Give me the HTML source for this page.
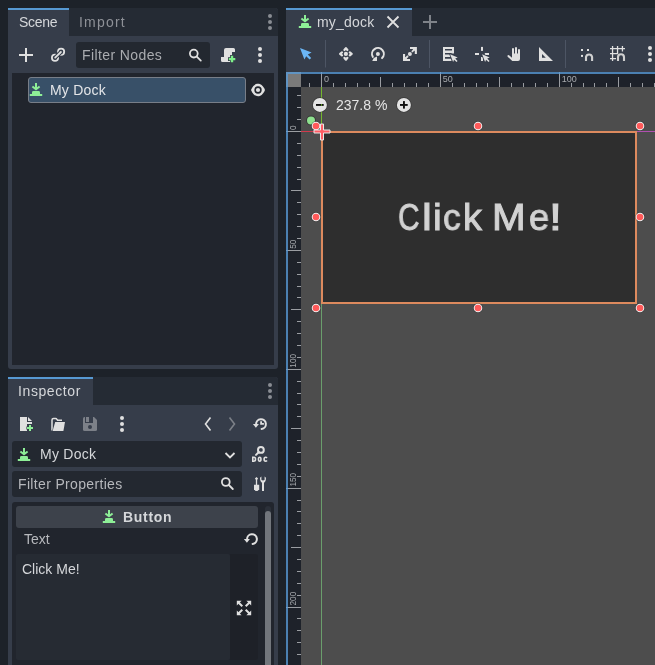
<!DOCTYPE html>
<html><head><meta charset="utf-8">
<style>
html,body{margin:0;padding:0;}
body{width:655px;height:665px;overflow:hidden;background:#1d2229;position:relative;font-family:"Liberation Sans",sans-serif;font-size:14px;color:#e0e0e0;}
.a{position:absolute;}
.t{position:absolute;white-space:nowrap;line-height:1;will-change:transform;}
svg{position:absolute;left:0;top:0;overflow:visible;will-change:transform;}
</style></head><body>

<!-- ============ SCENE DOCK ============ -->
<div class="a" style="left:8px;top:8px;width:270px;height:361px;background:#363d4a;border-radius:3px;"></div>
<div class="a" style="left:69px;top:8px;width:209px;height:28px;background:#252b34;border-top-right-radius:3px;"></div>
<div class="a" style="left:8px;top:8px;width:61px;height:2px;background:#5799d2;"></div>
<div class="t" style="left:19px;top:15px;color:#d5d7da;letter-spacing:-0.3px;">Scene</div>
<div class="t" style="left:79px;top:15px;color:#8e9197;letter-spacing:1.2px;">Import</div>

<div class="a" style="left:76px;top:42px;width:134px;height:26px;background:#232830;border-radius:3px;"></div>
<div class="t" style="left:82px;top:48px;color:#aaacb0;letter-spacing:0.4px;">Filter Nodes</div>

<div class="a" style="left:12px;top:73px;width:262px;height:292px;background:#21252d;"></div>
<div class="a" style="left:28px;top:77px;width:216px;height:24px;background:#385068;border:1px solid #787e88;border-radius:3px;"></div>
<div class="t" style="left:50px;top:83px;color:#e3e5e8;letter-spacing:0.2px;">My Dock</div>

<!-- ============ INSPECTOR DOCK ============ -->
<div class="a" style="left:8px;top:377px;width:270px;height:300px;background:#363d4a;border-radius:3px;"></div>
<div class="a" style="left:93px;top:377px;width:185px;height:28px;background:#252b34;border-top-right-radius:3px;"></div>
<div class="a" style="left:8px;top:377px;width:85px;height:2px;background:#5799d2;"></div>
<div class="t" style="left:18px;top:384px;color:#d5d7da;letter-spacing:0.6px;">Inspector</div>

<div class="a" style="left:12px;top:441px;width:230px;height:26px;background:#232830;border-radius:3px;"></div>
<div class="t" style="left:40px;top:447px;color:#d5d7da;letter-spacing:0.25px;">My Dock</div>
<div class="a" style="left:12px;top:471px;width:230px;height:26px;background:#232830;border-radius:3px;"></div>
<div class="t" style="left:18px;top:477px;color:#b6b8bc;letter-spacing:0.34px;">Filter Properties</div>

<div class="a" style="left:12px;top:502px;width:262px;height:170px;background:#21252d;border-radius:3px;"></div>
<div class="a" style="left:16px;top:506px;width:242px;height:22px;background:#3d424b;border-radius:3px;"></div>
<div class="t" style="left:123px;top:510px;color:#d5d7da;font-weight:bold;letter-spacing:0.7px;">Button</div>
<div class="t" style="left:24px;top:532px;color:#b6b8bc;">Text</div>
<div class="a" style="left:16px;top:554px;width:214px;height:106px;background:#262b33;border-radius:2px;"></div>
<div class="t" style="left:22px;top:562px;color:#d5d7da;">Click Me!</div>
<div class="a" style="left:230px;top:554px;width:28px;height:106px;background:#1e2128;border-radius:0 3px 3px 0;"></div>
<div class="a" style="left:265px;top:506px;width:6px;height:170px;background:#2b3039;border-radius:3px;"></div>
<div class="a" style="left:265px;top:511px;width:6px;height:170px;background:#72767c;border-radius:3px;"></div>

<!-- ============ VIEWPORT ============ -->
<div class="a" style="left:286px;top:8px;width:369px;height:657px;background:#363d4a;border-top-left-radius:3px;"></div>
<div class="a" style="left:412px;top:8px;width:243px;height:28px;background:#252b34;"></div>
<div class="a" style="left:286px;top:8px;width:126px;height:2px;background:#5799d2;"></div>
<div class="t" style="left:317px;top:15px;color:#d5d7da;letter-spacing:0.2px;">my_dock</div>

<div class="a" style="left:286px;top:72px;width:369px;height:593px;background:#4d4d4d;"></div>
<div class="a" style="left:286px;top:72px;width:369px;height:15px;background:#1e222a;"></div>
<div class="a" style="left:286px;top:72px;width:15px;height:593px;background:#1e222a;"></div>
<div class="a" style="left:286px;top:72px;width:15px;height:15px;background:#7a7a7a;"></div>

<div class="a" style="left:321px;top:131px;width:312px;height:169px;background:#2e2e2e;border:2px solid #dd8a5e;"></div>
<div style="position:absolute;left:0;top:0;color:#d2d2d2;-webkit-text-stroke:1.0px #d0d0d0;filter:blur(0.5px);"><div class="t" style="left:398.0px;top:199px;font-size:37px;transform:scaleX(0.805);transform-origin:0 0;">C</div><div class="t" style="left:422.1px;top:199px;font-size:37px;transform:scaleX(1.189);transform-origin:0 0;">l</div><div class="t" style="left:432.7px;top:199px;font-size:37px;transform:scaleX(1.059);transform-origin:0 0;">i</div><div class="t" style="left:442.9px;top:199px;font-size:37px;transform:scaleX(0.955);transform-origin:0 0;">c</div><div class="t" style="left:462.7px;top:199px;font-size:37px;transform:scaleX(1.021);transform-origin:0 0;">k</div><div class="t" style="left:492.4px;top:199px;font-size:37px;transform:scaleX(1.093);transform-origin:0 0;">M</div><div class="t" style="left:529.2px;top:199px;font-size:37px;transform:scaleX(0.978);transform-origin:0 0;">e</div><div class="t" style="left:549.2px;top:199px;font-size:37px;transform:scaleX(1.254);transform-origin:0 0;">!</div></div>
<div class="t" style="left:336px;top:98px;font-size:14px;color:#e6e6e6;">237.8 %</div>

<svg width="655" height="665" viewBox="0 0 655 665">

<defs>
<symbol id="gi" viewBox="0 0 16 16">
<path d="M7 2h2v5.2h-2z" fill="#8eef97"/>
<path d="M4.4 5.4 L8 8.3 L11.6 5.4" stroke="#8eef97" stroke-width="1.9" fill="none"/>
<path d="M4 13 V11.4 Q4 10 5.4 10 H10.6 Q12 10 12 11.4 V13 H14.2 V15 H1.8 V13Z" fill="#8eef97"/>
</symbol>
</defs>

<g stroke="#9a9da2" stroke-width="1"><line x1="309.5" y1="83" x2="309.5" y2="87" /><line x1="321.5" y1="72" x2="321.5" y2="87" /><line x1="333.5" y1="83" x2="333.5" y2="87" /><line x1="345.5" y1="83" x2="345.5" y2="87" /><line x1="357.5" y1="83" x2="357.5" y2="87" /><line x1="369.5" y1="83" x2="369.5" y2="87" /><line x1="380.5" y1="77" x2="380.5" y2="87" /><line x1="392.5" y1="83" x2="392.5" y2="87" /><line x1="404.5" y1="83" x2="404.5" y2="87" /><line x1="416.5" y1="83" x2="416.5" y2="87" /><line x1="428.5" y1="83" x2="428.5" y2="87" /><line x1="440.5" y1="72" x2="440.5" y2="87" /><line x1="452.5" y1="83" x2="452.5" y2="87" /><line x1="464.5" y1="83" x2="464.5" y2="87" /><line x1="476.5" y1="83" x2="476.5" y2="87" /><line x1="487.5" y1="83" x2="487.5" y2="87" /><line x1="499.5" y1="77" x2="499.5" y2="87" /><line x1="511.5" y1="83" x2="511.5" y2="87" /><line x1="523.5" y1="83" x2="523.5" y2="87" /><line x1="535.5" y1="83" x2="535.5" y2="87" /><line x1="547.5" y1="83" x2="547.5" y2="87" /><line x1="559.5" y1="72" x2="559.5" y2="87" /><line x1="571.5" y1="83" x2="571.5" y2="87" /><line x1="583.5" y1="83" x2="583.5" y2="87" /><line x1="594.5" y1="83" x2="594.5" y2="87" /><line x1="606.5" y1="83" x2="606.5" y2="87" /><line x1="618.5" y1="77" x2="618.5" y2="87" /><line x1="630.5" y1="83" x2="630.5" y2="87" /><line x1="642.5" y1="83" x2="642.5" y2="87" /><line x1="654.5" y1="83" x2="654.5" y2="87" /><line x1="297" y1="95.5" x2="301" y2="95.5" /><line x1="297" y1="107.5" x2="301" y2="107.5" /><line x1="297" y1="119.5" x2="301" y2="119.5" /><line x1="286" y1="131.5" x2="301" y2="131.5" /><line x1="297" y1="143.5" x2="301" y2="143.5" /><line x1="297" y1="155.5" x2="301" y2="155.5" /><line x1="297" y1="167.5" x2="301" y2="167.5" /><line x1="297" y1="179.5" x2="301" y2="179.5" /><line x1="291" y1="190.5" x2="301" y2="190.5" /><line x1="297" y1="202.5" x2="301" y2="202.5" /><line x1="297" y1="214.5" x2="301" y2="214.5" /><line x1="297" y1="226.5" x2="301" y2="226.5" /><line x1="297" y1="238.5" x2="301" y2="238.5" /><line x1="286" y1="250.5" x2="301" y2="250.5" /><line x1="297" y1="262.5" x2="301" y2="262.5" /><line x1="297" y1="274.5" x2="301" y2="274.5" /><line x1="297" y1="286.5" x2="301" y2="286.5" /><line x1="297" y1="297.5" x2="301" y2="297.5" /><line x1="291" y1="309.5" x2="301" y2="309.5" /><line x1="297" y1="321.5" x2="301" y2="321.5" /><line x1="297" y1="333.5" x2="301" y2="333.5" /><line x1="297" y1="345.5" x2="301" y2="345.5" /><line x1="297" y1="357.5" x2="301" y2="357.5" /><line x1="286" y1="369.5" x2="301" y2="369.5" /><line x1="297" y1="381.5" x2="301" y2="381.5" /><line x1="297" y1="393.5" x2="301" y2="393.5" /><line x1="297" y1="404.5" x2="301" y2="404.5" /><line x1="297" y1="416.5" x2="301" y2="416.5" /><line x1="291" y1="428.5" x2="301" y2="428.5" /><line x1="297" y1="440.5" x2="301" y2="440.5" /><line x1="297" y1="452.5" x2="301" y2="452.5" /><line x1="297" y1="464.5" x2="301" y2="464.5" /><line x1="297" y1="476.5" x2="301" y2="476.5" /><line x1="286" y1="488.5" x2="301" y2="488.5" /><line x1="297" y1="500.5" x2="301" y2="500.5" /><line x1="297" y1="511.5" x2="301" y2="511.5" /><line x1="297" y1="523.5" x2="301" y2="523.5" /><line x1="297" y1="535.5" x2="301" y2="535.5" /><line x1="291" y1="547.5" x2="301" y2="547.5" /><line x1="297" y1="559.5" x2="301" y2="559.5" /><line x1="297" y1="571.5" x2="301" y2="571.5" /><line x1="297" y1="583.5" x2="301" y2="583.5" /><line x1="297" y1="595.5" x2="301" y2="595.5" /><line x1="286" y1="607.5" x2="301" y2="607.5" /><line x1="297" y1="618.5" x2="301" y2="618.5" /><line x1="297" y1="630.5" x2="301" y2="630.5" /><line x1="297" y1="642.5" x2="301" y2="642.5" /><line x1="297" y1="654.5" x2="301" y2="654.5" /></g><g fill="#a6a9ad" font-size="9" font-family="Liberation Sans"><text x="323.9" y="82" >0</text><text x="442.8" y="82" >50</text><text x="561.7" y="82" >100</text><text transform="translate(296,129.9) rotate(-90)" font-size="9.3" textLength="4.6" lengthAdjust="spacingAndGlyphs">0</text><text transform="translate(296,248.8) rotate(-90)" font-size="9.3" textLength="9.2" lengthAdjust="spacingAndGlyphs">50</text><text transform="translate(296,367.7) rotate(-90)" font-size="9.3" textLength="13.8" lengthAdjust="spacingAndGlyphs">100</text><text transform="translate(296,486.6) rotate(-90)" font-size="9.3" textLength="13.8" lengthAdjust="spacingAndGlyphs">150</text><text transform="translate(296,605.5) rotate(-90)" font-size="9.3" textLength="13.8" lengthAdjust="spacingAndGlyphs">200</text></g>
<line x1="321.5" y1="87" x2="321.5" y2="131" stroke="#74b72e" stroke-width="1"/>
<line x1="321.5" y1="304" x2="321.5" y2="665" stroke="#6a9e6c" stroke-width="1"/>
<line x1="301" y1="131.5" x2="321" y2="131.5" stroke="#d13a4c" stroke-width="1"/>
<line x1="637" y1="131.5" x2="655" y2="131.5" stroke="#b04fb0" stroke-width="1"/>
<!-- zoom widget -->
<circle cx="319.9" cy="104.9" r="7.7" fill="#202020" opacity="0.45"/><circle cx="319.9" cy="104.9" r="7" fill="#e4e4e4"/><rect x="316" y="104" width="7.7" height="1.9" fill="#111"/><rect x="321" y="104" width="1" height="1.9" fill="#5a9a20"/>
<circle cx="403.9" cy="104.9" r="7.7" fill="#202020" opacity="0.45"/><circle cx="403.9" cy="104.9" r="7" fill="#e4e4e4"/><rect x="400" y="104" width="7.7" height="1.9" fill="#111"/><rect x="403" y="101.1" width="1.9" height="7.5" fill="#111"/>
<!-- pivot -->
<circle cx="311" cy="120.5" r="4.9" fill="#222" opacity="0.55"/>
<circle cx="311" cy="120.5" r="4" fill="#8ee08f"/>
<circle cx="316" cy="126" r="5" fill="#232323" opacity="0.35"/><circle cx="316" cy="126" r="4.3" fill="#f2f2f2"/><circle cx="316" cy="126" r="3.3" fill="#ff5a5a"/><circle cx="478" cy="126" r="5" fill="#232323" opacity="0.35"/><circle cx="478" cy="126" r="4.3" fill="#f2f2f2"/><circle cx="478" cy="126" r="3.3" fill="#ff5a5a"/><circle cx="640" cy="126" r="5" fill="#232323" opacity="0.35"/><circle cx="640" cy="126" r="4.3" fill="#f2f2f2"/><circle cx="640" cy="126" r="3.3" fill="#ff5a5a"/><circle cx="316" cy="217" r="5" fill="#232323" opacity="0.35"/><circle cx="316" cy="217" r="4.3" fill="#f2f2f2"/><circle cx="316" cy="217" r="3.3" fill="#ff5a5a"/><circle cx="640" cy="217" r="5" fill="#232323" opacity="0.35"/><circle cx="640" cy="217" r="4.3" fill="#f2f2f2"/><circle cx="640" cy="217" r="3.3" fill="#ff5a5a"/><circle cx="316" cy="308" r="5" fill="#232323" opacity="0.35"/><circle cx="316" cy="308" r="4.3" fill="#f2f2f2"/><circle cx="316" cy="308" r="3.3" fill="#ff5a5a"/><circle cx="478" cy="308" r="5" fill="#232323" opacity="0.35"/><circle cx="478" cy="308" r="4.3" fill="#f2f2f2"/><circle cx="478" cy="308" r="3.3" fill="#ff5a5a"/><circle cx="640" cy="308" r="5" fill="#232323" opacity="0.35"/><circle cx="640" cy="308" r="4.3" fill="#f2f2f2"/><circle cx="640" cy="308" r="3.3" fill="#ff5a5a"/>
<!-- pink cross -->
<path d="M320.5 124 h3 v6 h6.5 v3 h-6.5 v7 h-3 v-7 h-6.5 v-3 h6.5z" fill="#ff5c64" stroke="#e8e8e8" stroke-width="1"/>

<!-- scene dock icons -->
<g fill="#8a8d93"><circle cx="270" cy="16" r="2"/><circle cx="270" cy="22" r="2"/><circle cx="270" cy="28" r="2"/></g>
<g fill="#8a8d93"><circle cx="270" cy="385" r="2"/><circle cx="270" cy="391" r="2"/><circle cx="270" cy="397" r="2"/></g>
<path d="M19 55h14M26 48v14" stroke="#e0e0e0" stroke-width="2"/>
<use href="#gi" x="28" y="81" width="16" height="16"/>
<use href="#gi" x="297" y="13" width="16" height="16"/>
<use href="#gi" x="16" y="446" width="16" height="16"/>

<!-- link -->
<g fill="none" stroke="#e0e0e0" stroke-width="1.8">
<circle cx="55" cy="57.8" r="3.1"/><circle cx="61.1" cy="51.8" r="3.1"/>
<path d="M55.2 57.6 L60.9 52" stroke="#363d4a" stroke-width="4" stroke-linecap="round"/>
<path d="M55.2 57.6 L60.9 52" stroke-linecap="round"/>
</g>
<!-- search -->
<g fill="none" stroke="#e0e0e0" stroke-width="1.8" stroke-linecap="round">
<circle cx="193.8" cy="53.6" r="3.9"/><path d="M196.8 56.6 L200.8 60.6"/>
<circle cx="225.8" cy="482" r="3.9"/><path d="M228.8 485 L232.8 489"/>
</g>
<!-- script add -->
<g fill="#e0e0e0">
<path d="M224 50 Q224 48 226 48 H233.5 Q235 48 235 49.5 V52 H232 V62 H222.5 Q221 62 221 60.5 V57 H224 Z"/>
</g>
<g fill="#7ef08a" stroke="#363d4a" stroke-width="1.6" paint-order="stroke">
<path d="M230.9 55.8h2.3v2.2h2.1v2.3h-2.1v2h-2.3v-2h-2.1v-2.3h2.1z"/>
</g>
<g fill="#e0e0e0"><circle cx="260" cy="49" r="2"/><circle cx="260" cy="55" r="2"/><circle cx="260" cy="61" r="2"/></g>
<!-- eye -->
<path d="M251 90 C253 85.2 255.6 83.8 258 83.8 C260.4 83.8 263 85.2 265 90 C263 94.8 260.4 96.2 258 96.2 C255.6 96.2 253 94.8 251 90Z" fill="#e0e0e0"/>
<circle cx="258" cy="90" r="3.7" fill="#21252d"/><circle cx="258" cy="90" r="2.1" fill="#e0e0e0"/>

<!-- inspector toolbar -->
<g fill="#e0e0e0">
<rect x="20" y="417" width="7" height="14"/>
<path d="M28 417 L32 421 H28Z"/>
<rect x="27" y="422" width="5" height="2"/>
</g>
<path d="M29 425h2v2h2v2h-2v2h-2v-2h-2v-2h2z" fill="#8eef97" stroke="#363d4a" stroke-width="1.2" paint-order="stroke"/>
<path d="M52 430.5 V420 Q52 418.5 53.5 418.5 H55.5 Q56.5 418.5 57 419.5 L57.5 420.3 H62" fill="none" stroke="#e0e0e0" stroke-width="1.5"/>
<path d="M55.2 422 H65 L63.4 431 H52.6 Z" fill="#e0e0e0" stroke="#363d4a" stroke-width="0.8" paint-order="stroke"/>
<path d="M83 418.5 Q83 417 84.5 417 H94 L97 420 V429.5 Q97 431 95.5 431 H84.5 Q83 431 83 429.5 Z" fill="#7c8088"/>
<rect x="85" y="417" width="8" height="6" fill="#363d4a"/>
<rect x="86" y="417" width="3" height="5" fill="#7c8088"/>
<circle cx="90" cy="427" r="2" fill="#363d4a"/>
<g fill="#e0e0e0"><circle cx="122" cy="418" r="2"/><circle cx="122" cy="424" r="2"/><circle cx="122" cy="430" r="2"/></g>
<polyline points="210.5,417.5 205.5,424 210.5,430.5" fill="none" stroke="#e0e0e0" stroke-width="1.6"/>
<polyline points="229.5,417.5 234.5,424 229.5,430.5" fill="none" stroke="#7c8088" stroke-width="1.6"/>
<path d="M261.6 428.9 A4.9 4.9 0 1 0 256.1 424.3" fill="none" stroke="#e0e0e0" stroke-width="2" stroke-linecap="round"/>
<path d="M252.9 424 H258.9 L255.9 427.8Z" fill="#e0e0e0"/>
<path d="M260.2 421.3 h1.8 v1.6 h1.9 v1.8 h-3.7z" fill="#e0e0e0"/>
<polyline points="225.5,453 230,457.5 234.5,453" fill="none" stroke="#e0e0e0" stroke-width="1.8"/>
<circle cx="260.9" cy="449.9" r="2.9" fill="none" stroke="#e0e0e0" stroke-width="2"/>
<path d="M258.9 452 L256 454.9" stroke="#e0e0e0" stroke-width="2" stroke-linecap="round"/>
<g fill="none" stroke="#e0e0e0" stroke-width="1.6">
<path d="M252.8 457.3 V461.2 H253.9 Q255.5 461.2 255.5 459.25 Q255.5 457.3 253.9 457.3Z"/>
<ellipse cx="259.7" cy="459.25" rx="1.25" ry="1.95"/>
<path d="M267 457.9 Q266.5 457.3 265.6 457.3 Q264.1 457.3 264.1 459.25 Q264.1 461.2 265.6 461.2 Q266.5 461.2 267 460.6"/>
</g>
<g fill="#e0e0e0">
<path d="M256.5 476.9 L258.1 478.6 L256.5 480.4 L254.9 478.6Z"/>
<rect x="255.85" y="479" width="1.3" height="6"/>
<path d="M254 484.8 H259.2 V489.3 L257.6 491 H255.6 L254 489.3Z"/>
<path d="M260 477.8 Q260 481.8 262 482.8 V491 H264 V482.8 Q266 481.8 266 477.8 L264.6 476.6 V479.8 Q263 481 261.4 479.8 V476.6Z"/>
</g>
<use href="#gi" x="101" y="508" width="16" height="16"/>
<path d="M252.6 543.9 A4.9 4.9 0 1 0 247.1 539.3" fill="none" stroke="#e0e0e0" stroke-width="2" stroke-linecap="round"/>
<path d="M243.9 539 H249.9 L246.9 542.8Z" fill="#e0e0e0"/>
<!-- expand -->
<g fill="#e0e0e0">
<path d="M236.8 600.8 H241.6 L236.8 605.6Z"/><path d="M251.2 600.8 H246.4 L251.2 605.6Z"/>
<path d="M236.8 615.2 H241.6 L236.8 610.4Z"/><path d="M251.2 615.2 H246.4 L251.2 610.4Z"/>
</g>
<g stroke="#e0e0e0" stroke-width="2">
<path d="M238.5 602.5 L242.3 606.3 M249.5 602.5 L245.7 606.3 M238.5 613.5 L242.3 609.7 M249.5 613.5 L245.7 609.7"/>
</g>

<!-- viewport tab -->
<path d="M387.5 16.5 L398.5 27.5 M398.5 16.5 L387.5 27.5" stroke="#e0e0e0" stroke-width="1.8"/>
<path d="M423 22 H437 M430 15 V29" stroke="#7f8389" stroke-width="2"/>
<!-- toolbar -->
<path d="M300 48 L311.6 52.6 L307.8 54.6 L311.2 58 L309.6 59.6 L306.2 56.2 L304.4 59.6 Z" fill="#6bb6f6"/>
<g stroke="#4d5564" stroke-width="1"><path d="M325.5 40 V67.5 M429.5 40 V68 M565.5 40 V68"/></g>
<g fill="#e0e0e0">
<path d="M344.4 50 L345.9 48.1 L347.4 50" fill="none" stroke="#e0e0e0" stroke-width="2.2" stroke-linecap="round" stroke-linejoin="round" transform="rotate(0 345.9 53.9)"/><path d="M344.4 50 L345.9 48.1 L347.4 50" fill="none" stroke="#e0e0e0" stroke-width="2.2" stroke-linecap="round" stroke-linejoin="round" transform="rotate(90 345.9 53.9)"/><path d="M344.4 50 L345.9 48.1 L347.4 50" fill="none" stroke="#e0e0e0" stroke-width="2.2" stroke-linecap="round" stroke-linejoin="round" transform="rotate(180 345.9 53.9)"/><path d="M344.4 50 L345.9 48.1 L347.4 50" fill="none" stroke="#e0e0e0" stroke-width="2.2" stroke-linecap="round" stroke-linejoin="round" transform="rotate(270 345.9 53.9)"/><circle cx="345.9" cy="53.9" r="2.1"/>
<circle cx="377.9" cy="53.9" r="2"/>
<circle cx="409.9" cy="53.9" r="2"/>
</g>
<path d="M382.07 58.07 A5.9 5.9 0 1 0 372.8 56.85" fill="none" stroke="#e0e0e0" stroke-width="2" stroke-linecap="round"/>
<path d="M372.2 61 H377 V56.4 L373.8 58Z" fill="#e0e0e0"/>
<g fill="#e0e0e0">
<path d="M410 46.9 H416.9 V53.9 H414.8 V49 H410Z"/><path d="M403 54 H405.1 V58.9 H410 V61 H403Z"/>
<path d="M412.6 49 H414.8 V51.2Z"/><path d="M405.1 56.8 V58.9 H407.2Z"/>
</g>
<path d="M414.6 49.2 L411.9 51.9 M405.3 58.7 L408 56" stroke="#e0e0e0" stroke-width="1.8"/>
<!-- list select -->
<g fill="#e0e0e0">
<path fill-rule="evenodd" d="M443 47 H454 V53.6 H451.6 V61 H443Z M445 49.1 H452 V50.6 H445Z M445 53 H452 V54.5 H445Z M445 57.1 H452 V58.7 H445Z"/>
<!-- pivot -->
<rect x="481" y="46.9" width="2" height="4"/>
<rect x="475" y="53" width="4" height="2"/>
<rect x="484.8" y="53" width="4.2" height="2"/>
<rect x="481" y="57" width="2" height="4"/>
</g>
<g fill="#e0e0e0" stroke="#363d4a" stroke-width="1.6" paint-order="stroke" stroke-linejoin="round">
<path d="M450.1 54.2 L457.7 57.4 L455.2 58.6 L457.6 61 L456.5 62.1 L454.1 59.7 L453.1 62 Z"/>
<path d="M482.1 54.2 L489.7 57.4 L487.2 58.6 L489.6 61 L488.5 62.1 L486.1 59.7 L485.1 62 Z"/>
</g>
<g fill="#e0e0e0">
<!-- hand -->
<path d="M512 49 Q512 48 513 48 Q514 48 514 49 V53.5 H515 V48 Q515 47 516 47 Q517 47 517 48 V53.5 H518 V50 Q518 49 519 49 Q520 49 520 50 V59 Q520 61 518 61 H512.3 L507.7 56.8 Q507 56 507.8 55.3 Q508.6 54.7 509.4 55.4 L512 57.8 Z"/>
<!-- ruler -->
<path fill-rule="evenodd" d="M539 46.9 L553 61 H539Z M542 54.1 V57.7 H545.8Z"/>
<!-- snap -->
<rect x="581" y="49" width="2" height="2"/><rect x="587" y="49" width="2" height="2"/><rect x="581" y="54.9" width="2" height="2"/>
<!-- grid -->
<path d="M610 48 H625 V49.3 H610Z M610 52.9 H618.2 V54.2 H610Z M610 57.9 H616 V59.2 H610Z M611.9 46 H613.2 V61 H611.9Z M616.9 46 H618.2 V54 H616.9Z M621.8 46 H623.1 V51.6 H621.8Z"/>
<circle cx="650" cy="48" r="2"/><circle cx="650" cy="54" r="2"/><circle cx="650" cy="60" r="2"/>
</g>
<path d="M586 61 V57 A3.1 3.1 0 0 1 592.1 57 V61" fill="none" stroke="#d0d0d0" stroke-width="2.1"/>
<path d="M618 61 V57.2 A3 3 0 0 1 624 57.2 V61" fill="none" stroke="#d0d0d0" stroke-width="2.1"/>

</svg>
<div class="a" style="left:286px;top:72px;width:369px;height:593px;box-sizing:border-box;border:2px solid rgba(88,155,215,0.78);border-right:none;border-bottom:none;"></div>
</body></html>
